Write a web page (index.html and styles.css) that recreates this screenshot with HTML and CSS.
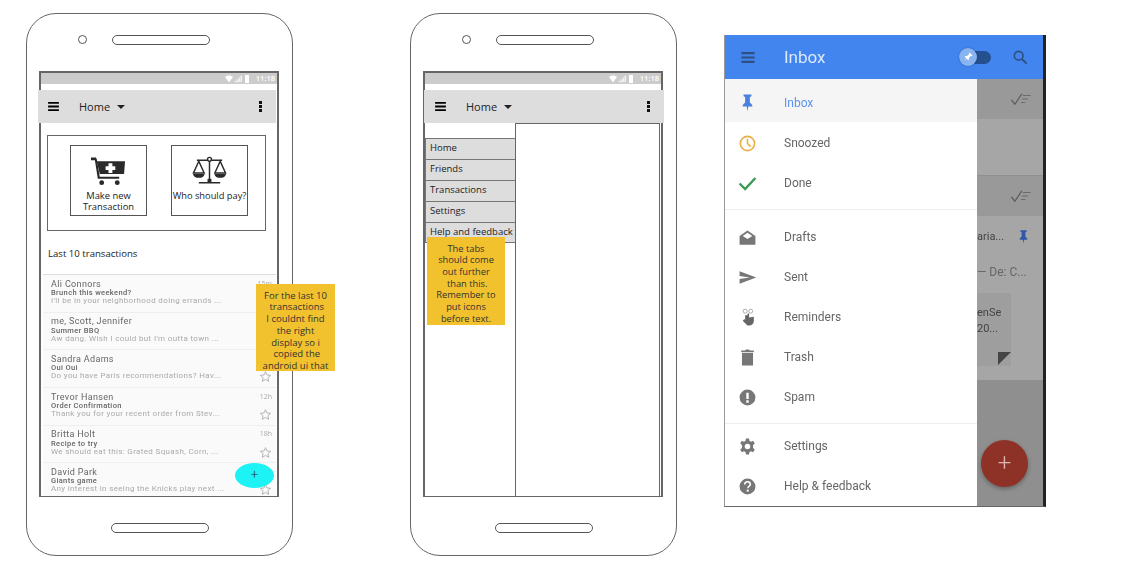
FILE: index.html
```html
<!DOCTYPE html>
<html lang="en">
<head>
    <meta charset="UTF-8">
    <meta name="viewport" content="width=device-width, initial-scale=1.0">
    <title>Wireframes</title>
    <link rel="stylesheet" href="styles.css">
</head>
<body>

    <svg class="defs" width="0" height="0">
        <symbol id="star" viewBox="0 0 24 24"><path d="M12 3l2.7 6.2 6.8.6-5.1 4.5 1.5 6.6L12 17.4l-5.9 3.5 1.5-6.6-5.1-4.5 6.8-.6z" fill="none" stroke="#aaa" stroke-width="1.6"/></symbol>
        <symbol id="status" viewBox="0 0 30 10">
            <path d="M0 2.500Q5 -1 10 2.500L5 9z" fill="#fff"/>
            <path d="M12 9h1.500V7.500H12zM14.500 9H16V5.500h-1.500zM17 9h1.500V3.500H17zM19.500 9H21V1h-1.500z" fill="#fff"/>
            <rect x="25" y="0" width="5" height="10" fill="#fff"/>
        </symbol>
        <symbol id="menu" viewBox="0 0 12 10"><path d="M0 0h12v2H0zM0 4h12v2H0zM0 8h12v2H0z"/></symbol>
        <symbol id="pin" viewBox="0 0 24 24"><path d="M7 2h10v2l-2 1v7l3 3v2h-5l-1 6-1-6H6v-2l3-3V5L7 4z"/></symbol>
        <symbol id="checks" viewBox="0 0 24 16"><path d="M1 9l4 5L13 2" fill="none" stroke="#5c5c5c" stroke-width="1.500"/><path d="M14 4h9M13 8h7M12 12h5" stroke="#6b6b6b" stroke-width="1.200"/></symbol>
    </svg>

    <!-- Main screen -->
    <div class="phone phone-main">
        <div class="phone-top"><span class="camera"></span><span class="speaker"></span></div>
        <div class="screen">
            <div class="status"><svg class="status-icons"><use href="#status"/></svg><span>11:18</span></div>
            <div class="toolbar">
                <svg class="burger"><use href="#menu"/></svg>
                <span class="toolbar-title">Home</span>
                <span class="caret"></span>
                <span class="kebab"><i></i><i></i><i></i></span>
            </div>
            <div class="actions">
                <div class="action">
                    <svg class="action-icon" viewBox="0 0 36 30">
                        <path d="M0 1h5l1 2 3 18h20v2H7L4 4H0z" fill="#2a2a2a"/>
                        <path d="M6 5h29l-1 13H9z" fill="#2a2a2a"/>
                        <path d="M18 7h4v3h3v4h-3v3h-4v-3h-3v-4h3z" fill="#fff"/>
                        <circle cx="11" cy="27" r="2.500" fill="#2a2a2a"/>
                        <circle cx="27" cy="27" r="2.500" fill="#2a2a2a"/>
                    </svg>
                    <span>Make new<br>Transaction</span>
                </div>
                <div class="action">
                    <svg class="action-icon" viewBox="0 0 36 30">
                        <g fill="none" stroke="#2a2a2a" stroke-width="1.500">
                            <circle cx="18" cy="3" r="2"/>
                            <path d="M5 4h11M20 4h11M18 5v22M7 27h22"/>
                            <path d="M7 5L1.500 17h11zM29 5l-5.500 12h11z"/>
                        </g>
                        <path d="M1 18h12q-1 4-6 4t-6-4zM23 18h12q-1 4-6 4t-6-4z" fill="#2a2a2a"/>
                        <path d="M16 27h4v-4h-4z" fill="#2a2a2a"/>
                    </svg>
                    <span class="nowrap">Who should pay?</span>
                </div>
            </div>
            <div class="section-title">Last 10 transactions</div>
            <div class="mail-list">
                <div class="mail">
                    <div class="mail-text"><b>Ali Connors</b><strong>Brunch this weekend?</strong><em>I'll be in your neighborhood doing errands ...</em></div>
                    <div class="mail-side"><small>15m</small></div>
                </div>
                <div class="mail">
                    <div class="mail-text"><b>me, Scott, Jennifer</b><strong>Summer BBQ</strong><em>Aw dang. Wish I could but I'm outta town ...</em></div>
                </div>
                <div class="mail">
                    <div class="mail-text"><b>Sandra Adams</b><strong>Oui Oui</strong><em>Do you have Paris recommendations? Hav...</em></div>
                    <div class="mail-side"><small>&nbsp;</small><svg><use href="#star"/></svg></div>
                </div>
                <div class="mail">
                    <div class="mail-text"><b>Trevor Hansen</b><strong>Order Confirmation</strong><em>Thank you for your recent order from Stev...</em></div>
                    <div class="mail-side"><small>12h</small><svg><use href="#star"/></svg></div>
                </div>
                <div class="mail">
                    <div class="mail-text"><b>Britta Holt</b><strong>Recipe to try</strong><em>We should eat this: Grated Squash, Corn, ...</em></div>
                    <div class="mail-side"><small>18h</small><svg><use href="#star"/></svg></div>
                </div>
                <div class="mail">
                    <div class="mail-text"><b>David Park</b><strong>Giants game</strong><em>Any interest in seeing the Knicks play next ...</em></div>
                    <div class="mail-side"><small>&nbsp;</small><svg><use href="#star"/></svg></div>
                </div>
            </div>
            <div class="fab-cyan">+</div>
            <div class="note note-list">For the last 10<br>&nbsp;transactions<br>I couldnt find<br>the right<br>display so i<br>&nbsp;copied the<br>android ui that</div>
        </div>
        <div class="phone-bottom"><span class="home-button"></span></div>
    </div>

    <!-- Side menu screen -->
    <div class="phone phone-menu">
        <div class="phone-top"><span class="camera"></span><span class="speaker"></span></div>
        <div class="screen">
            <div class="status"><svg class="status-icons"><use href="#status"/></svg><span>11:18</span></div>
            <div class="toolbar">
                <svg class="burger"><use href="#menu"/></svg>
                <span class="toolbar-title">Home</span>
                <span class="caret"></span>
                <span class="kebab"><i></i><i></i><i></i></span>
            </div>
            <div class="split">
                <div class="tabs">
                    <div class="tab">Home</div>
                    <div class="tab">Friends</div>
                    <div class="tab">Transactions</div>
                    <div class="tab">Settings</div>
                    <div class="tab">Help and feedback</div>
                </div>
                <div class="panel"></div>
            </div>
            <div class="note note-tabs">The tabs<br>should come<br>out further<br>&nbsp;than this.<br>Remember to<br>put icons<br>before text.</div>
        </div>
        <div class="phone-bottom"><span class="home-button"></span></div>
    </div>

    <!-- Reference drawer -->
    <div class="inbox">
        <div class="inbox-bar">
            <svg class="inbox-burger"><use href="#menu"/></svg>
            <span class="inbox-title">Inbox</span>
            <span class="toggle"><span class="toggle-knob"><svg viewBox="0 0 24 24"><use href="#pin"/></svg></span></span>
            <svg class="search" viewBox="0 0 24 24"><circle cx="10" cy="10" r="6.500" fill="none" stroke="#2f4f80" stroke-width="2.500"/><path d="M15 15l7 7" stroke="#2f4f80" stroke-width="2.800"/></svg>
        </div>
        <div class="inbox-body">
            <div class="drawer">
                <div class="drawer-group">
                    <div class="drawer-item active"><svg class="icon-pin"><use href="#pin"/></svg>Inbox</div>
                    <div class="drawer-item"><svg viewBox="0 0 24 24"><circle cx="12" cy="12" r="9" fill="none" stroke="#e9ad45" stroke-width="2"/><path d="M12 6v6l4 4" fill="none" stroke="#e9ad45" stroke-width="2"/></svg>Snoozed</div>
                    <div class="drawer-item"><svg viewBox="0 0 24 24"><path d="M2 12l7 7L22 5" fill="none" stroke="#3a9a55" stroke-width="3"/></svg>Done</div>
                </div>
                <div class="drawer-group">
                    <div class="drawer-item"><svg viewBox="0 0 24 24"><path d="M2 10l10-7 10 7v11H2z" fill="#777"/><path d="M6 10l6-4 6 4-6 4z" fill="#fff"/></svg>Drafts</div>
                    <div class="drawer-item"><svg viewBox="0 0 24 24"><path d="M2 4l21 8-21 8v-6l13-2-13-2z" fill="#777"/></svg>Sent</div>
                    <div class="drawer-item"><svg viewBox="0 0 24 24"><path d="M9 9h3V7h2v5l6-1v6q-1 5-6 5h-2l-6-6 2-2 1 1z" fill="#666"/><circle cx="9" cy="4" r="2.500" fill="none" stroke="#999"/><circle cx="16" cy="4" r="2.500" fill="none" stroke="#999"/></svg>Reminders</div>
                    <div class="drawer-item"><svg viewBox="0 0 24 24"><path d="M5 6h14v16H5zM4 3h5l1-1h4l1 1h5v2H4z" fill="#777"/></svg>Trash</div>
                    <div class="drawer-item"><svg viewBox="0 0 24 24"><circle cx="12" cy="12" r="10" fill="#777"/><path d="M10.500 6h3v8h-3zM10.500 15.500h3v3h-3z" fill="#fff"/></svg>Spam</div>
                </div>
                <div class="drawer-group last">
                    <div class="drawer-item"><svg viewBox="0 0 24 24"><path d="M10 2h4l.5 3 2 1 2.700-1.200 2 3.400L19 10v4l2.200 1.800-2 3.400-2.700-1.200-2 1-.5 3h-4l-.5-3-2-1-2.700 1.200-2-3.400L5 14v-4L2.800 8.200l2-3.400L7.500 6l2-1z" fill="#777"/><circle cx="12" cy="12" r="3.500" fill="#fff"/></svg>Settings</div>
                    <div class="drawer-item"><svg viewBox="0 0 24 24"><circle cx="12" cy="12" r="10" fill="#777"/><path d="M8.500 9.500q0-3.500 3.500-3.500t3.500 3.300q0 1.700-2 2.800-1 .6-1 2" fill="none" stroke="#fff" stroke-width="2"/><rect x="11" y="16" width="2.500" height="2.500" fill="#fff"/></svg>Help &amp; feedback</div>
                </div>
            </div>
            <div class="dimmed">
                <div class="dim-row dim-dark"><svg class="checks"><use href="#checks"/></svg></div>
                <div class="dim-row dim-light dim-tall"></div>
                <div class="dim-row dim-dark"><svg class="checks"><use href="#checks"/></svg></div>
                <div class="dim-mail">
                    <div class="dim-subject"><span>aria...</span><svg><use href="#pin"/></svg></div>
                    <div class="dim-from">&mdash; De: C...</div>
                    <div class="dim-card"><span>enSe<br>20...</span><i></i></div>
                </div>
                <div class="dim-foot"></div>
                <div class="fab-red">+</div>
            </div>
        </div>
    </div>

</body>
</html>
```

FILE: styles.css
```css
* {
    box-sizing: border-box;
}
body {
    margin: 0;
    width: 1126px;
    height: 586px;
    position: relative;
    overflow: hidden;
    background-color: #fff;
    font-family: "Open Sans", "Liberation Sans", sans-serif;
    color: #222;
}
.defs {
    position: absolute;
}

/* Phones */
.phone {
    position: absolute;
    top: 13px;
    width: 267px;
    height: 543px;
    border: 1.500px solid #666;
    border-radius: 30px;
    padding: 0 12px;
}
.phone-main {
    left: 26px;
}
.phone-menu {
    left: 410px;
}
.phone-top {
    height: 57px;
    display: flex;
    align-items: center;
    padding: 0 0 6px 39px;
}
.camera {
    width: 9px;
    height: 9px;
    border: 1.500px solid #555;
    border-radius: 50%;
    margin-right: 25px;
}
.speaker {
    width: 98px;
    height: 10px;
    border: 1.500px solid #555;
    border-radius: 5px;
}
.phone-bottom {
    display: flex;
    justify-content: center;
    padding-top: 26px;
}
.home-button {
    width: 98px;
    height: 10px;
    border: 1.500px solid #555;
    border-radius: 5px;
}
.screen {
    position: relative;
    width: 240px;
    height: 426px;
    border: 2px solid #666;
    border-bottom-width: 1.500px;
    display: flex;
    flex-direction: column;
}
.status {
    height: 11px;
    background-color: #ccc;
    color: #fff;
    font-size: 7.500px;
    font-weight: 600;
    line-height: 11px;
    display: flex;
    justify-content: flex-end;
    align-items: center;
    padding-right: 2px;
    flex: none;
}
.status-icons {
    width: 30px;
    height: 8px;
    margin-right: 4px;
}
.toolbar {
    height: 33px;
    margin: 6px 0 0 -3px;
    width: 238px;
    background-color: #ddd;
    display: flex;
    align-items: center;
    padding: 0 14px 0 10px;
    flex: none;
}
.phone-menu .toolbar {
    margin-left: -1px;
    width: 240px;
    padding-left: 11px;
}
.burger {
    width: 11px;
    height: 9px;
    margin-right: 20px;
}
.toolbar-title {
    font-size: 11px;
}
.caret {
    border: 4px solid transparent;
    border-top: 4px solid #222;
    border-bottom: 0;
    margin-left: 7px;
}
.kebab {
    margin-left: auto;
    display: flex;
    flex-direction: column;
    gap: 1.500px;
}
.kebab i {
    width: 3px;
    height: 2.500px;
    background-color: #111;
}
.actions {
    margin: 12px 0 0 6px;
    width: 219px;
    height: 96px;
    border: 1px solid #666;
    display: flex;
    gap: 24px;
    padding: 9px 0 0 22px;
    flex: none;
}
.action {
    width: 77px;
    height: 71px;
    border: 1px solid #555;
    display: flex;
    flex-direction: column;
    align-items: center;
    padding-top: 10px;
    font-size: 9.400px;
    line-height: 11px;
    text-align: center;
}
.action-icon {
    width: 35px;
    height: 30px;
    margin-bottom: 4px;
}
.nowrap {
    white-space: nowrap;
    font-size: 9.300px;
}
.section-title {
    font-size: 9.600px;
    line-height: 14px;
    margin: 16px 0 0 7px;
    flex: none;
}

/* Copied mail list */
.mail-list {
    margin: 13px 0 0 2px;
    width: 233px;
    flex: 1;
    overflow: hidden;
    border-top: 1px solid #ddd;
    background-color: #fafafa;
    filter: blur(.3px);
}
.mail {
    height: 37.700px;
    padding: 4.500px 3px 0 8px;
    border-bottom: 1px solid #eee;
    display: flex;
    justify-content: space-between;
}
.mail-text {
    display: flex;
    flex-direction: column;
    letter-spacing: .35px;
    white-space: nowrap;
    font-family: "Roboto", sans-serif;
}
.mail-text b {
    font-weight: 400;
    font-size: 9px;
    line-height: 9.500px;
    color: #666;
}
.mail-text strong {
    font-weight: 500;
    font-size: 7.500px;
    line-height: 8px;
    color: #666;
}
.mail-text em {
    font-style: normal;
    font-size: 8px;
    line-height: 8.500px;
    color: #aaa;
}
.mail-side {
    margin-left: auto;
    display: flex;
    flex-direction: column;
    align-items: flex-end;
    justify-content: space-between;
    padding: 0 1px 0 0;
    height: 28.500px;
}
.mail-side small {
    font-size: 7px;
    line-height: 8px;
    color: #aaa;
}
.mail-side svg {
    width: 13px;
    height: 13px;
}
.fab-cyan {
    position: absolute;
    left: 194px;
    top: 390px;
    width: 39px;
    height: 25px;
    border-radius: 50%;
    background-color: #1df3f5;
    font-size: 14px;
    font-weight: 300;
    line-height: 24px;
    text-align: center;
}

/* Sticky notes */
.note {
    position: absolute;
    background-color: #f2c12e;
    color: #333;
    text-align: center;
    overflow: hidden;
    white-space: nowrap;
}
.note-list {
    left: 215px;
    top: 211px;
    width: 79px;
    height: 87px;
    padding-top: 5.500px;
    font-size: 9.500px;
    line-height: 11.800px;
}
.note-tabs {
    left: 2px;
    top: 164px;
    width: 78px;
    height: 88px;
    padding-top: 5.500px;
    font-size: 9.300px;
    line-height: 11.700px;
}

/* Menu wireframe */
.split {
    flex: 1;
    display: flex;
    min-height: 0;
}
.tabs {
    width: 91px;
    padding-top: 15px;
    border-right: 1px solid #666;
}
.tab {
    height: 21px;
    background-color: #ddd;
    border: 1px solid #777;
    border-right: 0;
    border-bottom-width: 0;
    font-size: 9.500px;
    line-height: 18px;
    padding-left: 4px;
    white-space: nowrap;
    overflow: hidden;
}
.tab:last-child {
    border-bottom-width: 1px;
}
.panel {
    flex: 1;
    border-top: 1px solid #666;
    border-right: 1px solid #666;
    margin-right: 1px;
}

/* Drawer screenshot */
.inbox {
    position: absolute;
    left: 724px;
    top: 35px;
    width: 322px;
    height: 472px;
    border-left: 1px solid #999;
    border-right: 3px solid #222;
    border-bottom: 1px solid #666;
    display: flex;
    flex-direction: column;
    font-family: "Roboto", "Liberation Sans", sans-serif;
    filter: blur(.35px);
}
.inbox-bar {
    height: 44px;
    background-color: #4285ee;
    display: flex;
    align-items: center;
    padding-left: 15px;
    flex: none;
}
.inbox-burger {
    width: 16px;
    height: 11px;
    fill: #2f4f80;
    margin-right: 28px;
}
.inbox-title {
    font-size: 17px;
    color: #dce8fb;
}
.toggle {
    margin-left: auto;
    width: 32px;
    height: 13px;
    border-radius: 7px;
    background-color: #24508f;
    display: flex;
    align-items: center;
    margin-right: 21px;
}
.toggle-knob {
    width: 18px;
    height: 18px;
    border-radius: 50%;
    background-color: #8ab4f0;
    box-shadow: 0 0 2px rgba(0, 0, 0, .3);
    fill: #fff;
    padding: 4px;
    display: flex;
}
.toggle-knob svg {
    width: 10px;
    height: 10px;
    transform: rotate(45deg);
}
.search {
    width: 16px;
    height: 16px;
    margin-right: 15px;
}
.inbox-body {
    flex: 1;
    display: flex;
    min-height: 0;
}
.drawer {
    width: 252px;
    background-color: #fff;
    display: flex;
    flex-direction: column;
    flex: none;
}
.drawer-group {
    border-bottom: 1px solid #eee;
    padding-bottom: 6px;
    margin-bottom: 2px;
}
.drawer-group:nth-child(2) {
    padding-top: 5px;
    padding-bottom: 6px;
}
.drawer-group.last {
    border-bottom: 0;
    margin: 0;
    padding: 0;
}
.drawer-item {
    height: 40px;
    display: flex;
    align-items: center;
    font-size: 12px;
    color: #666;
    padding-left: 13px;
}
.drawer-item svg {
    width: 19px;
    height: 19px;
    margin-right: 27px;
    flex: none;
}
.drawer-item.active {
    height: 43px;
    margin-bottom: 1px;
    padding-top: 4px;
    background-color: #f5f5f5;
    color: #5c93ee;
}
.icon-pin {
    fill: #4a80e0;
}
.dimmed {
    flex: 1;
    position: relative;
    display: flex;
    flex-direction: column;
    background-color: #a6a6a6;
    min-width: 0;
}
.dim-row {
    height: 40px;
    flex: none;
    display: flex;
    align-items: center;
    justify-content: flex-end;
    padding-right: 11px;
}
.dim-dark {
    background-color: #999;
}
.dim-tall {
    height: 57px;
    border-bottom: 1px solid #8f8f8f;
}
.checks {
    width: 22px;
    height: 14px;
}
.dim-mail {
    height: 164px;
    flex: none;
    font-size: 11px;
    color: #444;
}
.dim-subject {
    display: flex;
    align-items: center;
    padding-top: 11px;
    height: 30px;
}
.dim-subject svg {
    width: 15px;
    height: 15px;
    fill: #2c5aa8;
    margin-left: 12px;
}
.dim-from {
    margin-top: 19px;
    color: #666;
    font-size: 12px;
    white-space: nowrap;
    line-height: 14px;
}
.dim-card {
    position: relative;
    margin-top: 14px;
    width: 34px;
    height: 73px;
    background-color: #9e9e9e;
    padding-top: 12px;
    line-height: 16px;
}
.dim-card span {
    display: block;
}
.dim-card i {
    position: absolute;
    right: 0;
    bottom: 1px;
    border-style: solid;
    border-width: 13px 13px 0 0;
    border-color: #444 transparent transparent transparent;
}
.dim-foot {
    flex: 1;
    background-color: #8f8f8f;
}
.fab-red {
    position: absolute;
    left: 4px;
    top: 361px;
    width: 47px;
    height: 47px;
    border-radius: 50%;
    background-color: #8e3228;
    box-shadow: 0 2px 4px rgba(0, 0, 0, .3);
    color: #d9b5b0;
    font-size: 24px;
    font-weight: 300;
    line-height: 46px;
    text-align: center;
}
```
